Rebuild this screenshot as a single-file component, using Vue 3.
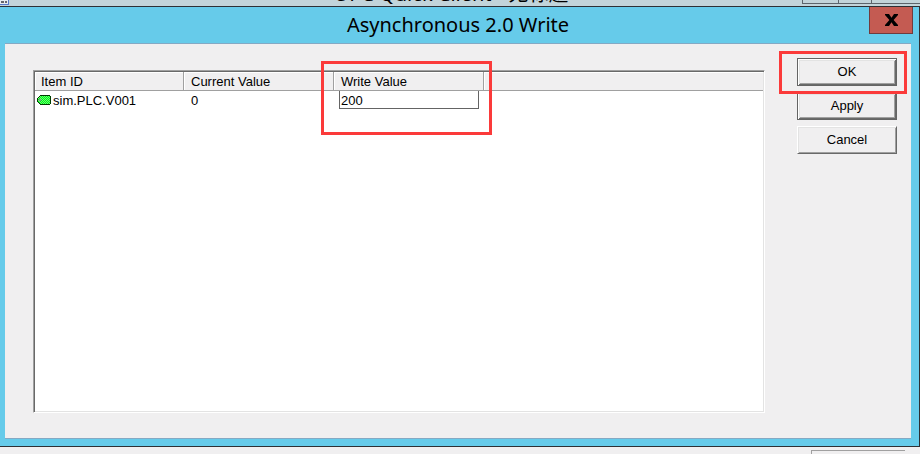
<script setup>
import { ref } from 'vue'

const items = ref([{ id: 'sim.PLC.V001', current: '0', write: '200' }])
</script>

<template>
  <div class="desktop">
    <header class="parent-bar">
      <svg class="parent-icon" width="9" height="5" viewBox="0 0 9 5" shape-rendering="crispEdges" aria-hidden="true">
        <path d="M0 0h8v4H0z" fill="#e8ecf0" />
        <path d="M1 1h3v2H1zM5 1h2v2H5z" fill="#66666c" />
        <path d="M8 0h1v5H0V4h8z" fill="#5878c8" />
      </svg>
      <span class="parent-title">OPC Quick Client - 无标题</span>
      <div class="parent-controls"><i></i><i></i><i></i></div>
    </header>

    <section class="dialog" role="dialog" aria-labelledby="dialog-title">
      <div class="title-bar">
        <h1 id="dialog-title">Asynchronous 2.0 Write</h1>
        <button class="close" type="button" aria-label="Close">
          <svg width="13" height="12" viewBox="0 0 13 12" aria-hidden="true">
            <path d="M0 0h4l2.5 3.8L9 0h4v1L8.6 6 13 11v1H9L6.500 8.200 4 12H0v-1l4.400-5L0 1z" fill="#000" />
          </svg>
        </button>
      </div>

      <div class="client">
        <div class="list">
          <table>
            <colgroup>
              <col class="col-id" />
              <col class="col-value" />
              <col class="col-value" />
              <col />
            </colgroup>
            <thead>
              <tr>
                <th>Item ID</th>
                <th>Current Value</th>
                <th class="marked">Write Value<span class="mark mark-value"></span></th>
                <th class="rest"></th>
              </tr>
            </thead>
            <tbody>
              <tr v-for="item in items" :key="item.id">
                <td class="item">
                  <svg width="14" height="10" viewBox="0 0 14 10" shape-rendering="crispEdges" aria-hidden="true">
                    <defs>
                      <pattern id="dither" width="2" height="2" patternUnits="userSpaceOnUse">
                        <path d="M0 0h2v2H0z" fill="#00f020" />
                        <path d="M0 0h1v1H0zM1 1h1v1H1z" fill="#6cff6c" />
                      </pattern>
                    </defs>
                    <path d="M3 0h10v1h1v8h-1v1H3V9H2V8H1V7H0V3h1V2h1V1h1z" fill="#003c00" />
                    <path d="M3 1h10v8H3V8H2V7H1V3h1V2h1z" fill="url(#dither)" />
                    <path d="M2 4h2v2H2z" fill="#8c8c8c" />
                  </svg>
                  <span>{{ item.id }}</span>
                </td>
                <td>{{ item.current }}</td>
                <td class="edit">
                  <input v-model="item.write" type="text" aria-label="Write Value" />
                </td>
                <td></td>
              </tr>
            </tbody>
          </table>
        </div>

        <div class="actions">
          <div class="action marked">
            <button class="push framed" type="button">OK</button>
            <span class="mark mark-ok"></span>
          </div>
          <button class="push framed" type="button">Apply</button>
          <button class="push" type="button">Cancel</button>
        </div>
      </div>
    </section>

    <footer class="status"><div class="pane"></div></footer>
  </div>
</template>

<style>
body {
  margin: 0;
  background: #f0eff0;
}
</style>

<style scoped>
.desktop {
  display: flex;
  flex-direction: column;
  height: 100vh;
  overflow: hidden;
  color: #000;
  font-family: "Liberation Sans", "Noto Sans CJK SC", sans-serif;
  font-size: 13px;
}
.parent-bar {
  display: grid;
  grid-template-columns: 1fr auto 1fr;
  grid-template-rows: 6px;
  align-items: end;
  height: 6px;
  flex: none;
  overflow: hidden;
  background: #c2d4da;
}
.parent-icon {
  align-self: start;
}
.parent-title {
  padding-right: 18px;
  font: 20px/24px "Noto Sans", "Noto Sans CJK SC", sans-serif;
  white-space: nowrap;
}
.parent-controls {
  display: flex;
  justify-content: flex-end;
  align-self: start;
}
.parent-controls i {
  box-sizing: border-box;
  width: 33px;
  height: 4px;
  border: solid #5c646c;
  border-width: 0 0 1px 1px;
}
.parent-controls i:first-child {
  width: 36px;
}
.parent-controls i:last-child {
  width: 49px;
}
.dialog {
  display: flex;
  flex-direction: column;
  flex: 1;
  min-height: 0;
  padding: 0 8px 7px 5px;
  border: solid #2d3035;
  border-width: 1px 1px 1px 0;
  background: #66cbea;
}
.title-bar {
  display: grid;
  grid-template-columns: 1fr auto 1fr;
  height: 36px;
  flex: none;
}
h1 {
  grid-column: 2;
  margin: 0;
  font: 20px/36px "Noto Sans", "Noto Sans CJK SC", sans-serif;
}
.close {
  display: flex;
  justify-content: center;
  align-items: center;
  justify-self: end;
  box-sizing: border-box;
  width: 44px;
  height: 27px;
  padding: 0;
  margin-right: -2px;
  border: 1px solid #713b3d;
  border-top: 0;
  background: #c45b52;
}
.client {
  display: flex;
  gap: 32px;
  flex: 1;
  min-height: 0;
  padding: 26px 14px 25px 28px;
  border-top: 1px solid #84a9c4;
  border-bottom: 1px solid #84a9c4;
  background: #f0eff0;
}
.list {
  flex: 1;
  min-width: 0;
  border: 1px solid #a0a0a0;
  border-right-color: #fff;
  border-bottom-color: #fff;
  background: #fff;
  box-shadow: inset 1px 1px #696969, inset -1px -1px #e3e3e3;
  padding: 1px;
}
table {
  width: 100%;
  table-layout: fixed;
  border-collapse: separate;
  border-spacing: 0;
}
.col-id {
  width: 149px;
}
.col-value {
  width: 150px;
}
th {
  box-sizing: border-box;
  height: 19px;
  padding: 2px 0 0 7px;
  border-right: 1px solid #a0a0a0;
  border-bottom: 1px solid #a0a0a0;
  background: #f0eff0;
  box-shadow: inset 1px 1px #fff;
  font-weight: 400;
  line-height: 16px;
  text-align: left;
}
th:first-child {
  padding-left: 6px;
}
th.rest {
  border-right: 0;
}
td {
  height: 18px;
  padding: 0 0 0 7px;
  line-height: 19px;
  vertical-align: top;
}
td.item {
  padding-left: 2px;
}
.item svg {
  display: inline-block;
  margin-right: 2px;
}
td.edit {
  padding: 0 5px;
}
input {
  display: block;
  box-sizing: border-box;
  width: 100%;
  height: 18px;
  padding: 1px 1px 0;
  border: 1px solid #646464;
  border-top: 0;
  border-radius: 0;
  outline: 0;
  background: #fff;
  color: #000;
  font: inherit;
}
.actions {
  display: flex;
  flex-direction: column;
  gap: 6px;
  width: 100px;
  margin-top: -12px;
}
.push {
  display: block;
  box-sizing: border-box;
  width: 100%;
  height: 28px;
  padding: 0 0 2px;
  border: 1px solid #fff;
  border-right-color: #696969;
  border-bottom-color: #696969;
  border-radius: 0;
  background: #f0eff0;
  box-shadow: inset 1px 1px #e3e3e3, inset -1px -1px #a0a0a0;
  color: #000;
  font: inherit;
}
.framed {
  border-color: #646464;
  box-shadow: inset 1px 1px #fff, inset -1px -1px #696969, inset 2px 2px #e3e3e3, inset -2px -2px #a0a0a0;
}
.marked {
  position: relative;
}
.mark {
  position: absolute;
  z-index: 1;
  border: 3px solid #fb3a3a;
  pointer-events: none;
}
.mark-value {
  inset: -11px -9px -45px -13px;
}
.mark-ok {
  inset: -7px -10px -8px -18px;
}
.status {
  display: flex;
  justify-content: flex-end;
  flex: none;
  height: 7px;
  padding: 0 15px 0 0;
  background: #f0eff0;
}
.pane {
  box-sizing: border-box;
  width: 94px;
  margin-top: 3px;
  border: solid #a0a0a0;
  border-width: 1px 0 0 1px;
}
</style>
